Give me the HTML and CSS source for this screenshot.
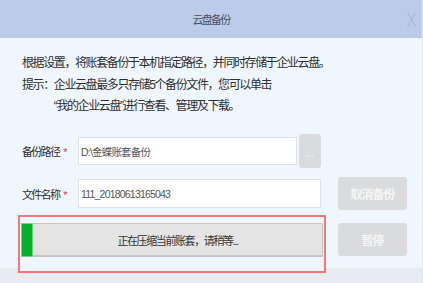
FILE: index.html
```html
<!DOCTYPE html>
<html lang="zh-CN">

<head>
  <meta charset="UTF-8">
  <title>云盘备份</title>
  <link rel="stylesheet" href="styles.css">
</head>

<body>
  <div class="dialog">
    <div class="titlebar">
      <span class="title">云盘备份</span>
      <span class="close">
        <svg width="9" height="15" viewBox="0 0 9 15">
          <path d="M0.5 0.5 L8.5 14.5 M8.5 0.5 L0.5 14.5" stroke="#a6b6d6" stroke-width="1.2" fill="none" />
        </svg>
      </span>
    </div>

    <div class="content">
      <div class="intro">
        <p>根据设置，将账套备份于本机指定路径，并同时存储于企业云盘。</p>
        <div class="tip">
          <span>提示：</span>
          <span>企业云盘最多只存储5个备份文件，您可以单击<br>“我的企业云盘”进行查看、管理及下载。</span>
        </div>
      </div>

      <div class="form-row row-path">
        <div class="label">备份路径<span class="req">*</span></div>
        <div class="field path-field">D:\金蝶账套备份</div>
        <div class="browse">...</div>
      </div>

      <div class="form-row row-name">
        <div class="label">文件名称<span class="req">*</span></div>
        <div class="field name-field">111_20180613165043</div>
        <div class="btn">取消备份</div>
      </div>

      <div class="progress-row">
        <div class="highlight">
          <div class="progress">
            <div class="progress-fill"></div>
            <div class="progress-text">正在压缩当前账套，请稍等...</div>
          </div>
        </div>
        <div class="btn pause">暂停</div>
      </div>
    </div>
  </div>
</body>

</html>
```

FILE: styles.css
```css
body {
  margin: 0;
  font-family: "Liberation Sans", "Noto Sans CJK SC", sans-serif;
}

.dialog {
  width: 423px;
  height: 283px;
  overflow: hidden;
  box-sizing: border-box;
  border-right: 1px solid #dfe6f0;
  background: linear-gradient(#f0f6fe 268px, #e9edf2 268px);
  color: #2e2e2e;
}

.titlebar {
  height: 38px;
  background: #bccbe9;
  position: relative;
  display: flex;
  align-items: center;
  justify-content: center;
}

.title {
  font-size: 11px;
  letter-spacing: -1.7px;
  color: #4a5263;
}

.close {
  position: absolute;
  right: 6px;
  top: 12px;
  width: 9px;
  height: 15px;
  line-height: 0;
}

.content {
  padding: 15px 0 0 18px;
}

.intro {
  padding-left: 4px;
  font-size: 12px;
  letter-spacing: -1.4px;
  line-height: 21.5px;
}

.intro p {
  margin: 0;
}

.tip {
  display: flex;
}

.form-row {
  display: flex;
  align-items: center;
  padding-left: 4px;
}

.row-path {
  margin-top: 16.5px;
  height: 34px;
}

.row-name {
  margin-top: 9px;
  height: 33px;
}

.label {
  width: 56px;
  font-size: 11px;
  letter-spacing: -1.7px;
}

.req {
  color: #e53935;
  margin-left: 4px;
  letter-spacing: 0;
}

.field {
  box-sizing: border-box;
  height: 28px;
  border: 1px solid #dce2ea;
  background: #fff;
  padding-left: 2px;
  display: flex;
  align-items: center;
  font-size: 10.5px;
  letter-spacing: -0.8px;
  color: #555;
}

.path-field {
  width: 219px;
}

.name-field {
  width: 243px;
  height: 29px;
}

.browse {
  box-sizing: border-box;
  width: 22px;
  height: 34px;
  margin-left: 2px;
  padding-bottom: 9px;
  background: #d9dbde;
  border-radius: 3px;
  color: #f7f7f7;
  font-size: 10px;
  display: flex;
  align-items: flex-end;
  justify-content: center;
}

.btn {
  width: 69px;
  height: 33px;
  margin-left: 17px;
  background: #d9dbdd;
  border-radius: 3px;
  color: #f6f6f6;
  font-size: 12px;
  font-weight: bold;
  letter-spacing: -1px;
  display: flex;
  align-items: center;
  justify-content: center;
}

/* progress area */
.progress-row {
  display: flex;
  align-items: flex-start;
  margin-top: 5px;
}

.highlight {
  box-sizing: border-box;
  width: 308px;
  height: 58px;
  border: 2px solid #f47878;
  background: #f0f6fe;
  padding: 6px 1px 0;
}

.progress {
  box-sizing: border-box;
  height: 34px;
  border: 1px solid #c6c6c6;
  border-bottom-width: 2px;
  background: #e4e4e4;
  display: flex;
}

.progress-fill {
  width: 12px;
  margin: -1px 0 -2px -1px;
  background: #07b02a;
  box-shadow: inset 0 0 0 1px #6fd685;
}

.progress-text {
  flex: 1;
  display: flex;
  align-items: center;
  justify-content: center;
  font-size: 11px;
  letter-spacing: -1.4px;
  color: #333;
}

.pause {
  margin-left: 12px;
  margin-top: 8px;
}
```
